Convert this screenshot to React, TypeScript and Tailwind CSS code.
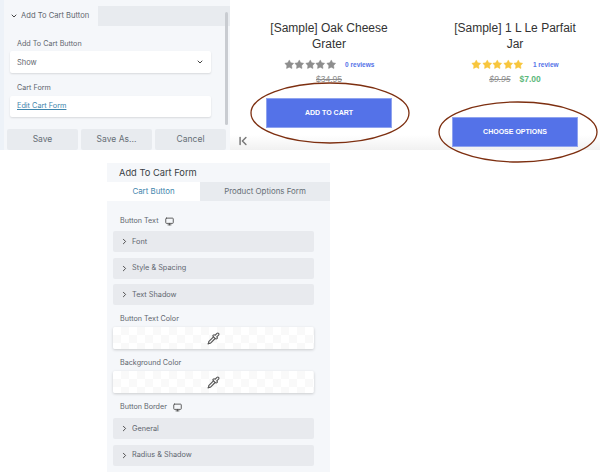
import React from 'react';
import { ChevronDown, ChevronRight, ChevronFirst, Monitor, Pipette, Star } from 'lucide-react';

const ui = { fontFamily: 'Inter, sans-serif' };

function Stars({ color }: { color: string }) {
  return (
    <div className="flex">
      {[0, 1, 2, 3, 4].map((i) => (
        <Star key={i} className={`w-[10.5px] h-[11px] ${color}`} fill="currentColor" strokeWidth={1} />
      ))}
    </div>
  );
}

function Accordion({ label, className = '' }: { label: string; className?: string }) {
  return (
    <div className={`h-[21px] rounded-[2px] bg-[#e8eaee] flex items-center pl-[7px] gap-[3px] text-[7.3px] text-[#5f666e] ${className}`}>
      <ChevronRight className="w-[9px] h-[9px] text-[#444]" strokeWidth={2.5} />
      <span className="pt-[1px]">{label}</span>
    </div>
  );
}

function ColorSwatch({ className = '' }: { className?: string }) {
  return (
    <div className={`h-[22px] rounded-[2px] shadow-[0_1px_3px_rgba(0,0,0,0.18)] bg-[repeating-conic-gradient(#f9f9f9_0_25%,#ffffff_0_50%)] bg-[length:16px_16px] flex items-center justify-center ${className}`}>
      <Pipette className="w-[13px] h-[13px] text-[#555]" strokeWidth={2} />
    </div>
  );
}

function Label({ text, icon, className = '' }: { text: string; icon?: boolean; className?: string }) {
  return (
    <div className={`flex items-center gap-[6px] text-[7.2px] leading-[10px] text-[#5f666e] ${className}`}>
      <span>{text}</span>
      {icon && <Monitor className="w-[9px] h-[9px] text-[#555]" strokeWidth={2.5} />}
    </div>
  );
}

function ProductTitle({ line1, line2 }: { line1: string; line2: string }) {
  return (
    <div className="text-center whitespace-nowrap text-[12px] leading-[16px] text-[#333]">
      {line1}
      <br />
      {line2}
    </div>
  );
}

export default function App() {
  return (
    <div className="relative w-[600px] h-[472px] bg-white overflow-hidden" style={ui}>
      {/* top strip */}
      <div className="flex h-[150px]">
        {/* builder settings */}
        <div className="w-[230px] bg-[#f5f7fa] pt-[6px] border-l-4 border-[#edf2f8] relative">
          <div className="flex bg-[#e8ebef] h-[20px]">
            <div className="w-[94px] bg-[#f5f7fa] flex items-center pl-[6px] gap-[3px] whitespace-nowrap text-[7.6px] text-[#5f666e]">
              <ChevronDown className="w-[8px] h-[8px] text-[#444]" strokeWidth={3} />
              <span>Add To Cart Button</span>
            </div>
          </div>
          <Label text="Add To Cart Button" className="mt-[13px] ml-[13px]" />
          <div className="mt-[2px] ml-[6px] w-[201px] h-[22px] bg-white rounded-[2px] shadow-[0_1px_2px_rgba(0,0,0,0.12)] flex items-center justify-between px-[7px] text-[7.5px] text-[#5f666e]">
            <span className="pt-[1px]">Show</span>
            <ChevronDown className="w-[8px] h-[8px] text-[#444]" strokeWidth={3} />
          </div>
          <Label text="Cart Form" className="mt-[10px] ml-[13px]" />
          <div className="mt-[3px] ml-[6px] w-[201px] h-[21px] bg-white rounded-[2px] shadow-[0_1px_2px_rgba(0,0,0,0.12)] flex items-center px-[7px] text-[7.3px] text-[#3f86ad] underline">
            Edit Cart Form
          </div>
          <div className="mt-[12px] ml-[3px] flex gap-[3px]">
            {['Save', 'Save As...', 'Cancel'].map((b) => (
              <div key={b} className="w-[71px] h-[21px] bg-[#e8ebef] rounded-[2px] flex items-center justify-center text-[8.5px] text-[#666e76]">
                {b}
              </div>
            ))}
          </div>
          <div className="absolute left-[221px] top-[12px] w-[3px] h-[113px] rounded-full bg-[#c9ccd1]" />
        </div>

        {/* product previews */}
        <div className="flex-1 relative bg-gradient-to-b from-white from-[90%] to-[#f1f1f1]" style={{ fontFamily: '"Liberation Sans", Arial, sans-serif' }}>
          <ChevronFirst className="absolute left-[6px] top-[134px] w-[14px] h-[14px] text-[#777]" strokeWidth={2.5} />
          <div className="flex pt-[20px]">
            <div className="w-[198px] flex flex-col items-center">
              <ProductTitle line1="[Sample] Oak Cheese" line2="Grater" />
              <div className="flex items-center gap-[9px] mt-[7px]">
                <Stars color="text-[#8e8e8e]" />
                <span className="text-[6.5px] font-bold text-[#5472e8]">0 reviews</span>
              </div>
              <div className="text-[8.5px] text-[#8e8e8e] line-through mt-[3px]">$34.95</div>
              <div className="mt-[12px] w-[126px] h-[30px] bg-[#5472e8] border border-[#8fa3ef] flex items-center justify-center text-[7px] font-bold text-white">
                ADD TO CART
              </div>
            </div>
            <div className="w-[126px] ml-[24px] flex flex-col items-center">
              <ProductTitle line1="[Sample] 1 L Le Parfait" line2="Jar" />
              <div className="flex items-center gap-[9px] mt-[7px]">
                <Stars color="text-[#f8c63d]" />
                <span className="text-[6.5px] font-bold text-[#5472e8]">1 review</span>
              </div>
              <div className="flex gap-[9px] text-[8.5px] mt-[3px]">
                <span className="italic line-through text-[#8e8e8e]">$9.95</span>
                <span className="font-bold text-[#5cb87a]">$7.00</span>
              </div>
              <div className="mt-[31px] w-[126px] h-[30px] bg-[#5472e8] border border-[#8fa3ef] flex items-center justify-center text-[7px] font-bold text-white">
                CHOOSE OPTIONS
              </div>
            </div>
          </div>
        </div>
      </div>

      {/* add to cart form panel */}
      <div className="ml-[107px] mt-[13px] w-[223px] h-[309px] bg-[#f5f7fa]">
        <div className="h-[19px] flex items-center pl-[12px] text-[9.3px] text-[#3a3f45]">Add To Cart Form</div>
        <div className="flex h-[19px] text-[7.9px]">
          <div className="w-[93px] bg-white flex items-center justify-center text-[#3f86ad]">Cart Button</div>
          <div className="flex-1 bg-[#e8ebef] flex items-center justify-center text-[#666e76]">Product Options Form</div>
        </div>
        <div className="pl-[6px] pr-[16px]">
          <Label text="Button Text" icon className="mt-[15px] ml-[7px]" />
          <Accordion label="Font" className="mt-[5px]" />
          <Accordion label="Style & Spacing" className="mt-[5.5px]" />
          <Accordion label="Text Shadow" className="mt-[5.5px]" />
          <Label text="Button Text Color" className="mt-[9px] ml-[7px]" />
          <ColorSwatch className="mt-[3px]" />
          <Label text="Background Color" className="mt-[9px] ml-[7px]" />
          <ColorSwatch className="mt-[3px]" />
          <Label text="Button Border" icon className="mt-[9px] ml-[7px]" />
          <Accordion label="General" className="mt-[6px]" />
          <Accordion label="Radius & Shadow" className="mt-[5.5px]" />
        </div>
      </div>

      {/* hand-drawn annotations over the buttons */}
      <svg className="absolute left-0 top-0 pointer-events-none" width="600" height="472" fill="none">
        <ellipse cx="330" cy="113" rx="79" ry="30" stroke="#7d2f10" strokeWidth="1.3" />
        <ellipse cx="518" cy="132" rx="79" ry="30" stroke="#7d2f10" strokeWidth="1.3" />
      </svg>
    </div>
  );
}
